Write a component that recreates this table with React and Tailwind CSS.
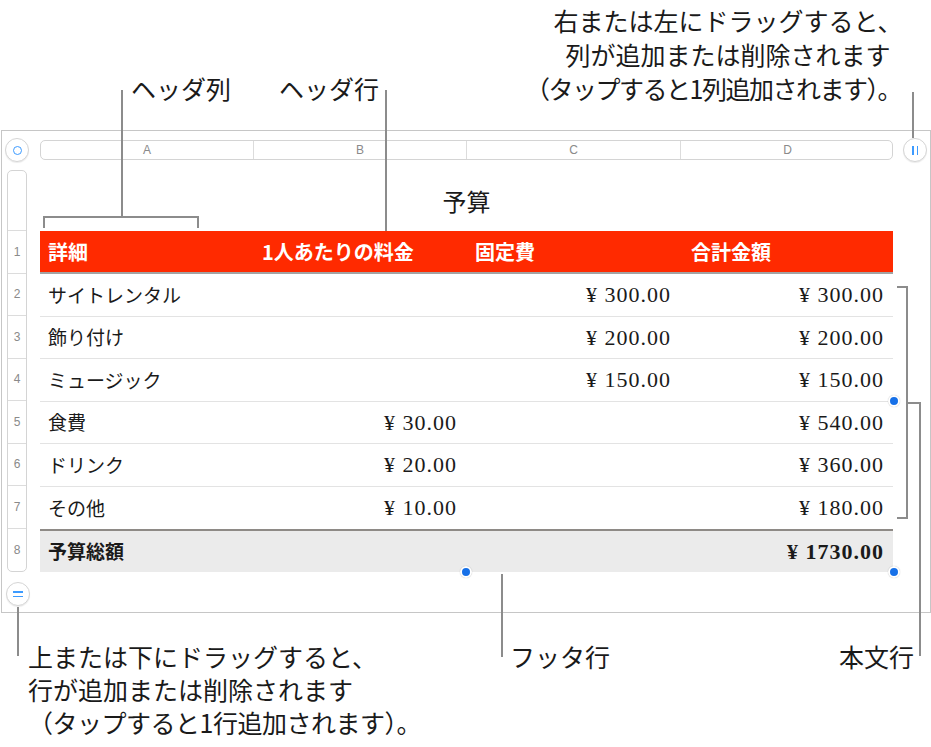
const rows = [
  { n: 2, label: "サイトレンタル", b: "", c: "¥ 300.00", d: "¥ 300.00" },
  { n: 3, label: "飾り付け", b: "", c: "¥ 200.00", d: "¥ 200.00" },
  { n: 4, label: "ミュージック", b: "", c: "¥ 150.00", d: "¥ 150.00" },
  { n: 5, label: "食費", b: "¥ 30.00", c: "", d: "¥ 540.00" },
  { n: 6, label: "ドリンク", b: "¥ 20.00", c: "", d: "¥ 360.00" },
  { n: 7, label: "その他", b: "¥ 10.00", c: "", d: "¥ 180.00" },
];

const COLS = "grid grid-cols-[213px_213px_214px_213px]";
const NUM = "font-['Liberation_Serif',serif] text-[22px] tracking-[1px] text-right pr-[9px]";

const CircleBtn = ({ className = "", children }) => (
  <div
    className={`flex h-[24px] w-[24px] shrink-0 items-center justify-center rounded-full border border-[#d5d5d5] bg-white shadow-[0_1px_1px_rgba(0,0,0,0.08)] ${className}`}
  >
    {children}
  </div>
);

const Handle = ({ className }) => (
  <div className={`absolute h-[12px] w-[12px] rounded-full border-2 border-white bg-[#1670e8] shadow-[0_0_1px_rgba(0,0,0,0.3)] ${className}`} />
);

export default function App() {
  return (
    <div className="relative h-[747px] w-[931px] overflow-hidden bg-white font-['Noto_Sans_CJK_JP',sans-serif] text-[#1a1a1a]">
      {/* top callouts */}
      <div className="flex h-[130px] text-[25px] leading-[34px]">
        <div className="shrink-0 pl-[131px] pt-[71px]">ヘッダ列</div>
        <div className="shrink-0 pl-[48px] pt-[71px]">ヘッダ行</div>
        <div className="ml-[139px] w-[420px] shrink-0 pt-[3px] text-center">
          <div>右または左にドラッグすると、</div>
          <div>列が追加または削除されます</div>
          <div className="mr-[30px] tracking-[-1.5px]">（タップすると1列追加されます）。</div>
        </div>
      </div>

      {/* table frame */}
      <div className="ml-px h-[483px] w-[930px] border border-[#c6c6c6]">
        <div className="flex items-center pl-[3px] pt-[7px]">
          <CircleBtn>
            <div className="h-[9px] w-[9px] rounded-full border-[1.5px] border-[#3d9bff]" />
          </CircleBtn>
          <div className="ml-[11px] grid h-[20px] w-[853px] grid-cols-[213px_213px_214px_213px] rounded-[5px] border border-[#d4d4d4] font-['Liberation_Sans',sans-serif] text-[12px] text-[#8a8a8a]">
            {["A", "B", "C", "D"].map((c, i) => (
              <div
                key={c}
                className={`flex items-center justify-center ${i < 3 ? "border-r border-[#dcdcdc]" : ""}`}
              >
                {c}
              </div>
            ))}
          </div>
          <CircleBtn className="ml-[10px]">
            <div className="flex gap-[3px]">
              <div className="h-[9px] w-[1.5px] bg-[#3d9bff]" />
              <div className="h-[9px] w-[1.5px] bg-[#3d9bff]" />
            </div>
          </CircleBtn>
        </div>

        <div className="mt-[8px] flex pl-[5px]">
          {/* row header bar */}
          <div className="flex w-[20px] flex-col rounded-[5px] border border-[#d4d4d4] font-['Liberation_Sans',sans-serif] text-[12px] text-[#8a8a8a]">
            <div className="h-[60px] border-b border-[#dcdcdc]" />
            {[1, 2, 3, 4, 5, 6, 7, 8].map((n) => (
              <div
                key={n}
                className={`flex h-[42.5px] items-center justify-center ${n < 8 ? "border-b border-[#dcdcdc]" : ""}`}
              >
                {n}
              </div>
            ))}
          </div>

          {/* table */}
          <div className="relative ml-[13px] w-[853px]">
            <div className="flex h-[61px] items-center justify-center text-[24px]">予算</div>

            <div className={`${COLS} h-[43px] items-center border-b-2 border-[#a3a3a3] bg-[#ff2a00] text-[20px] font-bold text-white`}>
              <div className="pl-[8px]">詳細</div>
              <div className="pl-[9px]">1人あたりの料金</div>
              <div className="pl-[9px]">固定費</div>
              <div className="pl-[11px]">合計金額</div>
            </div>

            {rows.map((r) => (
              <div
                key={r.n}
                className={`${COLS} h-[42.5px] items-center text-[19px] ${r.n < 7 ? "border-b border-[#e3e3e3]" : ""}`}
              >
                <div className="pl-[8px]">{r.label}</div>
                <div className={NUM}>{r.b}</div>
                <div className={NUM}>{r.c}</div>
                <div className={NUM}>{r.d}</div>
              </div>
            ))}

            <div className={`${COLS} h-[43px] items-center border-t-2 border-[#8e8a86] bg-[#ebebeb] text-[19px] font-bold`}>
              <div className="pl-[8px]">予算総額</div>
              <div />
              <div />
              <div className={`${NUM} font-bold`}>¥ 1730.00</div>
            </div>

            <Handle className="left-[420px] top-[396px]" />
            <Handle className="left-[848px] top-[396px]" />
            <Handle className="left-[848px] top-[225px]" />
          </div>
        </div>

        <CircleBtn className="ml-[4px] mt-[10px]">
          <div className="flex flex-col gap-[3px]">
            <div className="h-[1.5px] w-[10px] bg-[#3d9bff]" />
            <div className="h-[1.5px] w-[10px] bg-[#3d9bff]" />
          </div>
        </CircleBtn>
      </div>

      {/* bottom callouts */}
      <div className="flex pt-[27px] text-[25px] leading-[33px]">
        <div className="w-[510px] shrink-0 pl-[28px]">
          <div>上または下にドラッグすると、</div>
          <div>行が追加または削除されます</div>
          <div className="tracking-[-0.5px]">（タップすると1行追加されます）。</div>
        </div>
        <div>フッタ行</div>
        <div className="ml-auto pr-[17px]">本文行</div>
      </div>

      {/* leader lines */}
      <div className="absolute left-[121px] top-[90px] h-[128px] w-[2px] bg-[#8c8c8c]" />
      <div className="absolute left-[43px] top-[216px] h-[2px] w-[156px] bg-[#8c8c8c]" />
      <div className="absolute left-[43px] top-[216px] h-[12px] w-[2px] bg-[#8c8c8c]" />
      <div className="absolute left-[197px] top-[216px] h-[12px] w-[2px] bg-[#8c8c8c]" />
      <div className="absolute left-[385px] top-[90px] h-[141px] w-[2px] bg-[#8c8c8c]" />
      <div className="absolute left-[912px] top-[92px] h-[46px] w-[2px] bg-[#8c8c8c]" />
      <div className="absolute left-[17px] top-[607px] h-[49px] w-[2px] bg-[#8c8c8c]" />
      <div className="absolute left-[501px] top-[574px] h-[83px] w-[2px] bg-[#8c8c8c]" />
      <div className="absolute left-[897px] top-[286px] h-[2px] w-[11px] bg-[#8c8c8c]" />
      <div className="absolute left-[906px] top-[286px] h-[233px] w-[2px] bg-[#8c8c8c]" />
      <div className="absolute left-[897px] top-[517px] h-[2px] w-[11px] bg-[#8c8c8c]" />
      <div className="absolute left-[906px] top-[402px] h-[2px] w-[15px] bg-[#8c8c8c]" />
      <div className="absolute left-[919px] top-[402px] h-[254px] w-[2px] bg-[#8c8c8c]" />
    </div>
  );
}
